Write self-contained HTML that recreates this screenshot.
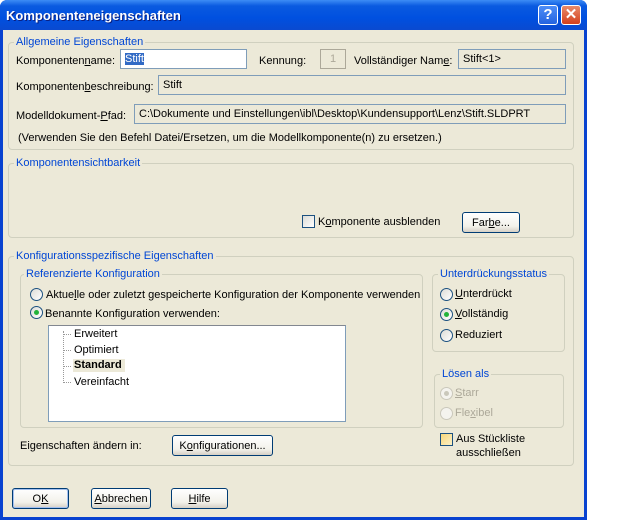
<!DOCTYPE html>
<html><head><meta charset="utf-8"><style>
*{box-sizing:border-box;margin:0;padding:0}
body{width:640px;height:520px;background:#fff;position:relative;overflow:hidden;font-family:"Liberation Sans",sans-serif;font-size:11px;color:#000}
.a{position:absolute;white-space:nowrap}
#dlg{position:absolute;left:0;top:0;width:587px;height:520px;background:#0842d0;border-radius:7px 7px 0 0}
#body{position:absolute;left:3px;top:30px;width:581px;height:487px;background:#ECE9D8}
#title{position:absolute;left:0;top:0;width:587px;height:30px;border-radius:7px 7px 0 0;background:linear-gradient(#3d8cf5,#0a5ae0 20%,#0050e0 60%,#0a4ad0)}
.grp{position:absolute;border:1px solid #D0D0BF;border-radius:4px}
.lg{position:absolute;color:#0046D5;background:#ECE9D8;padding:0 2px;line-height:12px}
.box{position:absolute;border:1px solid #7F9DB9;height:20px;line-height:19px;padding-left:4px}
.btn{position:absolute;height:21px;border:1px solid #003C74;border-radius:3px;background:linear-gradient(#fff,#f2f1ea 70%,#d6d0c5);text-align:center;line-height:20px}
.rad{position:absolute;width:13px;height:13px;border:1px solid #1C5180;border-radius:50%;background:linear-gradient(135deg,#dcdcd6,#fff)}
.rad.on::after{content:"";position:absolute;left:3px;top:3px;width:5px;height:5px;border-radius:50%;background:#22b33a}
.dis{border-color:#cac8bb}
u{text-decoration:underline}
</style></head><body>
<div id="dlg">
<div id="title"></div>
<div class="a" style="left:6px;top:8px;color:#fff;font-weight:bold;font-size:13px;text-shadow:1px 1px #0a1f80">Komponenteneigenschaften</div>
<div class="a" style="left:538px;top:5px;width:20px;height:20px;border:1px solid #fff;border-radius:3px;background:linear-gradient(#4e8ef7,#2363e0);color:#fff;font-weight:bold;font-size:15px;text-align:center;line-height:18px">?</div>
<div class="a" style="left:561px;top:5px;width:20px;height:20px;border:1px solid #fff;border-radius:3px;background:linear-gradient(#e88a6a,#d4401c);color:#fff;font-weight:bold;font-size:15px;text-align:center;line-height:18px">✕</div>
<div id="body"></div>

<div class="grp" style="left:8px;top:42px;width:566px;height:108px"></div>
<div class="lg" style="left:14px;top:36px">Allgemeine Eigenschaften</div>
<div class="a" style="left:16px;top:55px">Komponenten<u>n</u>ame:</div>
<div class="box" style="left:120px;top:49px;width:127px;background:#fff;border-color:#7F9DB9"><span style="background:#316AC5;color:#fff">Stift</span></div>
<div class="a" style="left:259px;top:55px">Kennun<u>g</u>:</div>
<div class="box" style="left:320px;top:49px;width:26px;color:#aca899;text-align:center;padding:0;border-color:#aca899">1</div>
<div class="a" style="left:354px;top:55px">Vollständiger Nam<u>e</u>:</div>
<div class="box" style="left:458px;top:49px;width:108px">Stift&lt;1&gt;</div>
<div class="a" style="left:16px;top:81px">Komponenten<u>b</u>eschreibung:</div>
<div class="box" style="left:158px;top:75px;width:408px">Stift</div>
<div class="a" style="left:16px;top:110px">Modelldokument-<u>P</u>fad:</div>
<div class="box" style="left:134px;top:104px;width:432px">C:\Dokumente und Einstellungen\ibl\Desktop\Kundensupport\Lenz\Stift.SLDPRT</div>
<div class="a" style="left:18px;top:132px">(Verwenden Sie den Befehl Datei/Ersetzen, um die Modellkomponente(n) zu ersetzen.)</div>

<div class="grp" style="left:8px;top:163px;width:566px;height:75px"></div>
<div class="lg" style="left:14px;top:157px">Komponentensichtbarkeit</div>
<div class="a" style="left:302px;top:215px;width:13px;height:13px;border:1px solid #1C5180;background:linear-gradient(135deg,#dcdcd6,#fff)"></div>
<div class="a" style="left:318px;top:216px">K<u>o</u>mponente ausblenden</div>
<div class="btn" style="left:462px;top:212px;width:58px">Far<u>b</u>e...</div>

<div class="grp" style="left:8px;top:256px;width:566px;height:210px"></div>
<div class="lg" style="left:14px;top:250px">Konfigurationsspezifische Eigenschaften</div>
<div class="grp" style="left:20px;top:274px;width:403px;height:154px"></div>
<div class="lg" style="left:24px;top:268px">Referenzierte Konfiguration</div>
<div class="rad" style="left:30px;top:288px"></div>
<div class="a" style="left:46px;top:289px">Aktue<u>l</u>le oder zuletzt gespeicherte Konfiguration der Komponente verwenden</div>
<div class="rad on" style="left:30px;top:306px"></div>
<div class="a" style="left:45px;top:308px">Benannte Konfiguration verwenden:</div>
<div class="a" style="left:48px;top:325px;width:298px;height:97px;background:#fff;border:1px solid #7F9DB9;border-top-color:#828790"></div>
<div class="a" style="left:63px;top:331px;width:1px;height:52px;border-left:1px dotted #999"></div>
<div class="a" style="left:64px;top:334px;width:7px;border-top:1px dotted #999"></div>
<div class="a" style="left:64px;top:350px;width:7px;border-top:1px dotted #999"></div>
<div class="a" style="left:64px;top:366px;width:7px;border-top:1px dotted #999"></div>
<div class="a" style="left:64px;top:382px;width:7px;border-top:1px dotted #999"></div>
<div class="a" style="left:74px;top:328px">Erweitert</div>
<div class="a" style="left:74px;top:344px">Optimiert</div>
<div class="a" style="left:73px;top:359px;background:#ECE9D8;padding:0 3px 1px 1px;font-weight:bold">Standard</div>
<div class="a" style="left:74px;top:376px">Vereinfacht</div>

<div class="grp" style="left:432px;top:274px;width:133px;height:78px"></div>
<div class="lg" style="left:438px;top:268px">Unterdrückungsstatus</div>
<div class="rad" style="left:440px;top:288px"></div>
<div class="a" style="left:455px;top:288px"><u>U</u>nterdrückt</div>
<div class="rad on" style="left:440px;top:308px"></div>
<div class="a" style="left:455px;top:308px"><u>V</u>ollständig</div>
<div class="rad" style="left:440px;top:329px"></div>
<div class="a" style="left:455px;top:329px">Reduziert</div>

<div class="grp" style="left:434px;top:374px;width:130px;height:54px"></div>
<div class="lg" style="left:440px;top:368px">Lösen als</div>
<div class="rad dis" style="left:440px;top:387px;background:#f4f3ee"></div>
<div class="a" style="left:440px;top:387px;width:13px;height:13px"><div style="position:absolute;left:4px;top:4px;width:5px;height:5px;border-radius:50%;background:#cac8bb"></div></div>
<div class="a" style="left:455px;top:387px;color:#aca899"><u>S</u>tarr</div>
<div class="rad dis" style="left:440px;top:407px;background:#f4f3ee"></div>
<div class="a" style="left:455px;top:407px;color:#aca899">Fle<u>x</u>ibel</div>
<div class="a" style="left:440px;top:433px;width:13px;height:13px;border:1px solid #1C5180;background:linear-gradient(135deg,#f8d77a,#fbf0c8)"></div>
<div class="a" style="left:456px;top:432px;line-height:14px">Aus Stückliste<br>ausschließen</div>

<div class="a" style="left:20px;top:440px">Eigenschaften ändern in:</div>
<div class="btn" style="left:172px;top:435px;width:101px">K<u>o</u>nfigurationen...</div>

<div class="btn" style="left:12px;top:488px;width:57px;box-shadow:inset 0 0 0 1px #a4c0ef">O<u>K</u></div>
<div class="btn" style="left:91px;top:488px;width:60px"><u>A</u>bbrechen</div>
<div class="btn" style="left:171px;top:488px;width:57px"><u>H</u>ilfe</div>
</div>
</body></html>
